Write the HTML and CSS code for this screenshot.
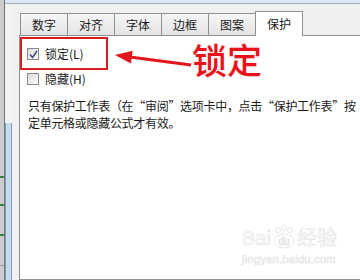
FILE: index.html
```html
<!DOCTYPE html>
<html lang="zh-CN">
<head>
    <meta charset="UTF-8">
    <meta name="viewport" content="width=device-width, initial-scale=1.0">
    <title>设置单元格格式 - 保护</title>
    <link rel="stylesheet" href="styles.css">
</head>
<body>
    <div class="sheet"></div>
    <div class="window">
        <div class="topbar"></div>
        <div class="main">
            <div class="edge"><div class="edge-blue"></div></div>
            <div class="dialog">
                <div class="tabs">
                    <div class="tab">数字</div>
                    <div class="tab">对齐</div>
                    <div class="tab">字体</div>
                    <div class="tab">边框</div>
                    <div class="tab">图案</div>
                    <div class="tab active">保护</div>
                </div>
                <div class="panel">
                    <div class="row">
                        <span class="check">
                            <svg width="9" height="9" viewBox="0 0 9 9"><path d="M1 4.5 L3.5 7.5 L8 1" fill="none" stroke="#3c4f8a" stroke-width="1.6"/></svg>
                        </span>
                        <span>锁定(L)</span>
                    </div>
                    <div class="row">
                        <span class="check"></span>
                        <span>隐藏(H)</span>
                    </div>
                    <p class="note">只有保护工作表（在“审阅”选项卡中，点击“保护工作表”按<br>定单元格或隐藏公式才有效。</p>

                    <!-- annotation layer -->
                    <div class="redbox"></div>
                    <svg class="arrow" width="180" height="40" viewBox="0 0 180 40">
                        <line x1="108" y1="20.8" x2="171" y2="29" stroke="#e3141c" stroke-width="3"/>
                        <polygon points="95,19 112.6,14.8 111,27.6" fill="#e3141c"/>
                    </svg>
                    <div class="callout">锁定</div>
                </div>
            </div>
        </div>
    </div>

    <div class="watermark">
        <div class="wm-top">
            <span>Bai</span>
            <span class="paw">
                <svg width="26" height="24" viewBox="0 0 26 24">
                    <g fill="#fff" stroke="#e8e8e8" stroke-width="1">
                        <circle cx="7" cy="5" r="2.5"/>
                        <circle cx="13" cy="3" r="2.5"/>
                        <circle cx="19" cy="5" r="2.5"/>
                        <ellipse cx="13" cy="16" rx="10" ry="7"/>
                    </g>
                    <text x="13" y="20" text-anchor="middle" font-size="10" fill="#fff" stroke="#e6e6e6" stroke-width="0.8" font-family="Liberation Sans, sans-serif">du</text>
                </svg>
            </span>
            <span>经验</span>
        </div>
        <div class="wm-bottom">jingyan.baidu.com</div>
    </div>
</body>
</html>
```

FILE: styles.css
```css
body{
    margin: 0;
    width: 360px;
    height: 280px;
    overflow: hidden;
    display: flex;
    position: relative;
    background: #f0f0f0;
    font-family: "Noto Sans CJK SC", "Liberation Sans", sans-serif;
    font-size: 12px;
    color: #1a1a1a;
}

.sheet{
    width: 4px;
    flex: none;
    background-color: #cdcdcd;
    background-image:
        linear-gradient(#3f7a3f, #3f7a3f),
        linear-gradient(#3f7a3f, #3f7a3f),
        linear-gradient(#3f7a3f, #3f7a3f),
        linear-gradient(#9a9a9a, #9a9a9a);
    background-size: 4px 2px, 4px 2px, 4px 2px, 4px 1px;
    background-position: 0 176px, 0 204px, 0 234px, 0 265px;
    background-repeat: no-repeat;
}

.window{
    flex: 1;
    display: flex;
    flex-direction: column;
    border-left: 1px solid #747474;
}
.topbar{
    height: 3px;
    background: #dce7f4;
    border-bottom: 1px solid #a3abb5;
}
.main{
    flex: 1;
    display: flex;
}

.edge{
    width: 7px;
    flex: none;
    display: flex;
    flex-direction: column;
    background: #f3f3f3;
}
.edge-blue{
    margin-top: 119px;
    flex: 1;
    background: #c6daf1;
    border-left: 1px solid #7b9cc8;
    border-right: 1px solid #7b9cc8;
}

.dialog{
    flex: 1;
    display: flex;
    flex-direction: column;
    padding: 7px 0 0 7px;
    margin-right: -40px;
}

.tabs{
    display: flex;
    align-items: flex-end;
    height: 24px;
    padding-left: 1px;
    position: relative;
    z-index: 1;
}
.tab{
    box-sizing: border-box;
    width: 48px;
    height: 22px;
    margin-right: -1px;
    border: 1px solid #8e9096;
    border-bottom: none;
    background: linear-gradient(#f6f6f6, #e4e4e4);
    display: flex;
    align-items: center;
    justify-content: center;
    padding-bottom: 1px;
}
.tab.active{
    height: 25px;
    margin-bottom: -1px;
    background: #fff;
    padding-bottom: 2px;
}

.panel{
    flex: 1;
    background: #fff;
    border: 1px solid #8e9096;
    padding: 10px 0 0 7px;
    position: relative;
}

.row{
    display: flex;
    align-items: center;
    gap: 6px;
    height: 16px;
    line-height: 16px;
    margin-bottom: 9px;
}
.check{
    box-sizing: border-box;
    width: 12px;
    height: 12px;
    border: 1px solid #8a8a8a;
    background: linear-gradient(135deg, #dcdcdc, #fbfbfb);
    display: flex;
    align-items: center;
    justify-content: center;
}

.note{
    margin: 10px 0 0 1px;
    line-height: 17px;
    white-space: nowrap;
    letter-spacing: -0.3px;
}

.redbox{
    position: absolute;
    left: 0;
    top: 1px;
    width: 88px;
    height: 33px;
    box-sizing: border-box;
    border: 2px solid #dc1c1c;
}
.arrow{
    position: absolute;
    left: 0;
    top: 0;
}
.callout{
    position: absolute;
    left: 172px;
    top: 5px;
    font-size: 35px;
    line-height: 1;
    font-weight: 500;
    font-family: "Noto Sans CJK SC", sans-serif;
    color: #e8121b;
    text-shadow: 0 0 2px #fff, 0 0 2px #fff, 0 0 3px #d4d4d4;
}

.watermark{
    position: absolute;
    left: 242px;
    top: 225px;
    color: #fefefe;
    -webkit-text-stroke: 0.7px #e6e6e6;
    font-family: "Liberation Sans", "Noto Sans CJK SC", sans-serif;
}
.wm-top{
    display: flex;
    align-items: flex-end;
    font-size: 20px;
    line-height: 22px;
}
.paw svg{
    display: block;
}
.wm-bottom{
    font-size: 11px;
    margin-top: 4px;
    letter-spacing: 0.3px;
}
```
